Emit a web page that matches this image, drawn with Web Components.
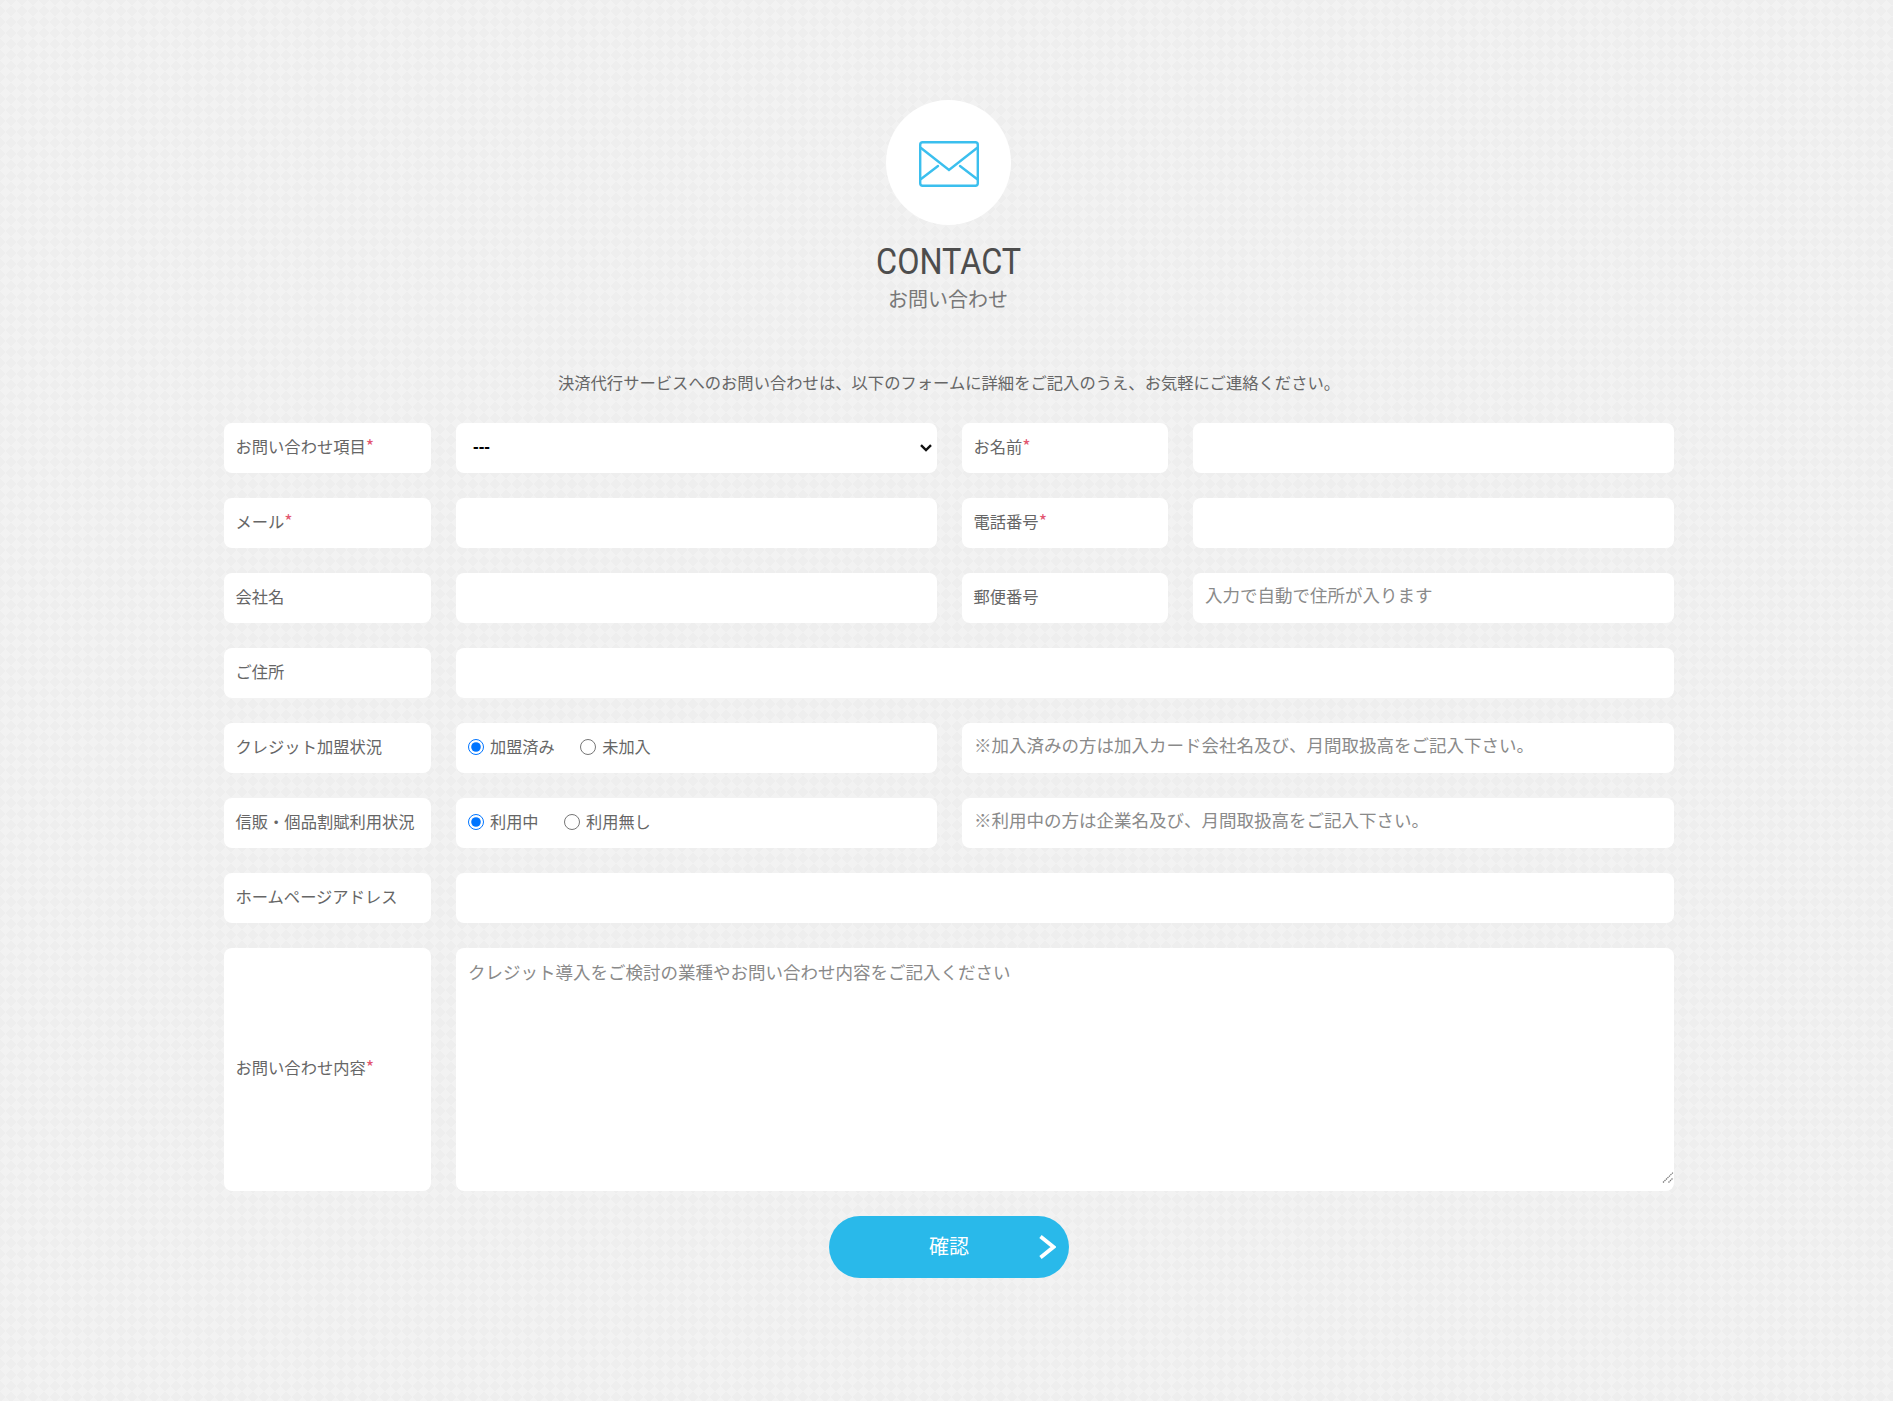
<!DOCTYPE html>
<html lang="ja">
<head>
<meta charset="utf-8">
<title>CONTACT</title>
<style>
   html, body {
      margin: 0;
      padding: 0;
   }
   body {
      font-family: "Noto Sans CJK JP", "Noto Sans", sans-serif;
      color: #666;
      background-color: #f2f2f2;
      background-image:
         linear-gradient(45deg, #eeeeee 25%, transparent 25%, transparent 75%, #eeeeee 75%),
         linear-gradient(-45deg, #eeeeee 25%, transparent 25%, transparent 75%, #eeeeee 75%);
      background-size: 11px 11px;
   }
</style>
</head>
<body>
<contact-page>
   <contact-heading title-text="CONTACT" sub-text="お問い合わせ"></contact-heading>
   <contact-form></contact-form>
</contact-page>

<script>
class ContactPage extends HTMLElement {
   constructor() {
      super();
      this.attachShadow({ mode: 'open' });
      this.shadowRoot.innerHTML = `
         <style>
            :host {
               display: block;
               height: 1401px;
               box-sizing: border-box;
               padding: 100px 219px 0 224px;
               overflow: hidden;
            }
         </style>
         <slot></slot>
      `;
   }
}
customElements.define('contact-page', ContactPage);

class ContactHeading extends HTMLElement {
   constructor() {
      super();
      this.attachShadow({ mode: 'open' });
      this.shadowRoot.innerHTML = `
         <style>
            :host {
               display: flex;
               flex-direction: column;
               align-items: center;
            }
            .circle {
               width: 125px;
               height: 125px;
               margin-right: 2px;
               border-radius: 50%;
               background: #fff;
               display: flex;
               align-items: center;
               justify-content: center;
            }
            svg {
               margin: 2px 0 0 2px;
            }
            h1 {
               margin: 14px 0 0;
               font: 400 36px/46px Roboto, sans-serif;
               color: #4d4d4d;
               transform: scaleX(.9);
            }
            p {
               margin: 0 2px 0 0;
               font-size: 20px;
               line-height: 28px;
               color: #777;
            }
         </style>
         <div class="circle">
            <svg width="60" height="46" viewBox="0 0 60 46" fill="none" stroke="#3bbfee" stroke-width="2.4" stroke-linecap="round">
               <rect x="1.2" y="1.2" width="57.6" height="43.6" rx="2.5"/>
               <path d="M2 7 L30 29 L58 7"/>
               <path d="M2 38 L19 25"/>
               <path d="M58 38 L41 25"/>
            </svg>
         </div>
         <h1></h1>
         <p></p>
      `;
   }
   connectedCallback() {
      this.shadowRoot.querySelector('h1').textContent = this.getAttribute('title-text');
      this.shadowRoot.querySelector('p').textContent = this.getAttribute('sub-text');
   }
}
customElements.define('contact-heading', ContactHeading);

class FieldLabel extends HTMLElement {
   constructor() {
      super();
      this.attachShadow({ mode: 'open' });
      this.shadowRoot.innerHTML = `
         <style>
            :host {
               display: flex;
               align-items: center;
               box-sizing: border-box;
               padding: 0 12px 5px 11.5px;
               min-height: 50px;
               background: #fff;
               border-radius: 8px;
               font-size: 16.3px;
               line-height: 24px;
               color: #666;
               white-space: nowrap;
            }
            .req {
               color: #e2566f;
               font-size: 18px;
               line-height: 1;
            }
         </style>
         <span><slot></slot><span class="req"></span></span>
      `;
   }
   connectedCallback() {
      if (this.hasAttribute('required')) {
         this.shadowRoot.querySelector('.req').textContent = '*';
      }
   }
}
customElements.define('field-label', FieldLabel);

class RadioGroup extends HTMLElement {
   constructor() {
      super();
      this.attachShadow({ mode: 'open' });
      this.shadowRoot.innerHTML = `
         <style>
            :host {
               display: flex;
               align-items: center;
               box-sizing: border-box;
               padding: 0 12px 3px;
               height: 50px;
               gap: 25.5px;
               background: #fff;
               border-radius: 8px;
               font-size: 16.2px;
               color: #666;
            }
            label {
               display: flex;
               align-items: center;
               gap: 6px;
            }
            span {
               padding-bottom: 2px;
            }
            input {
               width: 16px;
               height: 16px;
               margin: 0;
            }
         </style>
      `;
   }
   connectedCallback() {
      const name = this.getAttribute('name');
      this.getAttribute('options').split(',').forEach((text, i) => {
         const label = document.createElement('label');
         const radio = document.createElement('input');
         const caption = document.createElement('span');
         radio.type = 'radio';
         radio.name = name;
         radio.checked = i === 0;
         caption.textContent = text;
         label.append(radio, caption);
         this.shadowRoot.append(label);
      });
   }
}
customElements.define('radio-group', RadioGroup);

class SelectBox extends HTMLElement {
   constructor() {
      super();
      this.attachShadow({ mode: 'open' });
      this.shadowRoot.innerHTML = `
         <style>
            :host {
               display: block;
               position: relative;
               height: 50px;
            }
            select {
               appearance: none;
               box-sizing: border-box;
               width: 100%;
               height: 50px;
               border: 0;
               border-radius: 8px;
               background: #fff;
               padding: 0 12px 3px 17px;
               font: 700 17px "Liberation Sans", sans-serif;
               color: #000;
               outline: 0;
            }
            svg {
               position: absolute;
               right: 5px;
               top: 21px;
               pointer-events: none;
            }
         </style>
         <select><option>---</option></select>
         <svg width="12" height="8" viewBox="0 0 12 8" fill="none" stroke="#111" stroke-width="2.4">
            <path d="M1 1.2 L6 6 L11 1.2"/>
         </svg>
      `;
   }
}
customElements.define('select-box', SelectBox);

class ContactForm extends HTMLElement {
   constructor() {
      super();
      this.attachShadow({ mode: 'open' });
      this.shadowRoot.innerHTML = `
         <style>
            :host {
               display: block;
            }
            .intro {
               margin: 57px 0 0;
               text-align: center;
               font-size: 16.32px;
               line-height: 24px;
               color: #666;
            }
            form {
               margin-top: 29px;
               display: grid;
               grid-template-columns: 207px 481px 206px 481px;
               column-gap: 25px;
               row-gap: 25px;
            }
            input[type=text], textarea {
               box-sizing: border-box;
               width: 100%;
               height: 50px;
               border: 0;
               border-radius: 8px;
               background: #fff;
               padding: 0 12px 8px;
               font: 17.5px "Noto Sans CJK JP", "Noto Sans", sans-serif;
               color: #666;
               outline: 0;
            }
            ::placeholder {
               color: #8a8a8a;
            }
            .area {
               position: relative;
            }
            textarea {
               display: block;
               height: 243px;
               padding: 11px 12px;
               resize: none;
            }
            .area svg {
               position: absolute;
               right: 0;
               bottom: 8px;
            }
            .wide {
               grid-column: 2 / 5;
            }
            .half {
               grid-column: 3 / 5;
            }
            .actions {
               grid-column: 1 / 5;
               display: flex;
               justify-content: center;
            }
            button {
               position: relative;
               width: 240px;
               height: 62px;
               padding: 0 0 3px;
               border: 0;
               border-radius: 31px;
               background: #29b9ea;
               color: #fff;
               font: 400 20px "Noto Sans CJK JP", sans-serif;
            }
            button svg {
               position: absolute;
               right: 13px;
               top: 19px;
            }
         </style>
         <p class="intro">決済代行サービスへのお問い合わせは、以下のフォームに詳細をご記入のうえ、お気軽にご連絡ください。</p>
         <form>
            <field-label required>お問い合わせ項目</field-label>
            <select-box></select-box>
            <field-label required>お名前</field-label>
            <input type="text">

            <field-label required>メール</field-label>
            <input type="text">
            <field-label required>電話番号</field-label>
            <input type="text">

            <field-label>会社名</field-label>
            <input type="text">
            <field-label>郵便番号</field-label>
            <input type="text" placeholder="入力で自動で住所が入ります">

            <field-label>ご住所</field-label>
            <input type="text" class="wide">

            <field-label>クレジット加盟状況</field-label>
            <radio-group name="credit" options="加盟済み,未加入"></radio-group>
            <input type="text" class="half" placeholder="※加入済みの方は加入カード会社名及び、月間取扱高をご記入下さい。">

            <field-label>信販・個品割賦利用状況</field-label>
            <radio-group name="shinpan" options="利用中,利用無し"></radio-group>
            <input type="text" class="half" placeholder="※利用中の方は企業名及び、月間取扱高をご記入下さい。">

            <field-label>ホームページアドレス</field-label>
            <input type="text" class="wide">

            <field-label required>お問い合わせ内容</field-label>
            <div class="area wide">
               <textarea placeholder="クレジット導入をご検討の業種やお問い合わせ内容をご記入ください"></textarea>
               <svg width="12" height="11" viewBox="0 0 12 11" fill="none" stroke="#777" stroke-width="1.2" stroke-dasharray="1.4 .7">
                  <path d="M1 10.5 L11 .5"/>
                  <path d="M6.5 10.5 L11 6"/>
               </svg>
            </div>

            <div class="actions">
               <button type="button">確認
                  <svg width="17" height="24" viewBox="0 0 17 24" fill="none" stroke="#fff" stroke-width="3.8">
                     <path d="M1.5 1.5 L14.5 12 L1.5 22.5"/>
                  </svg>
               </button>
            </div>
         </form>
      `;
   }
}
customElements.define('contact-form', ContactForm);
</script>
</body>
</html>
